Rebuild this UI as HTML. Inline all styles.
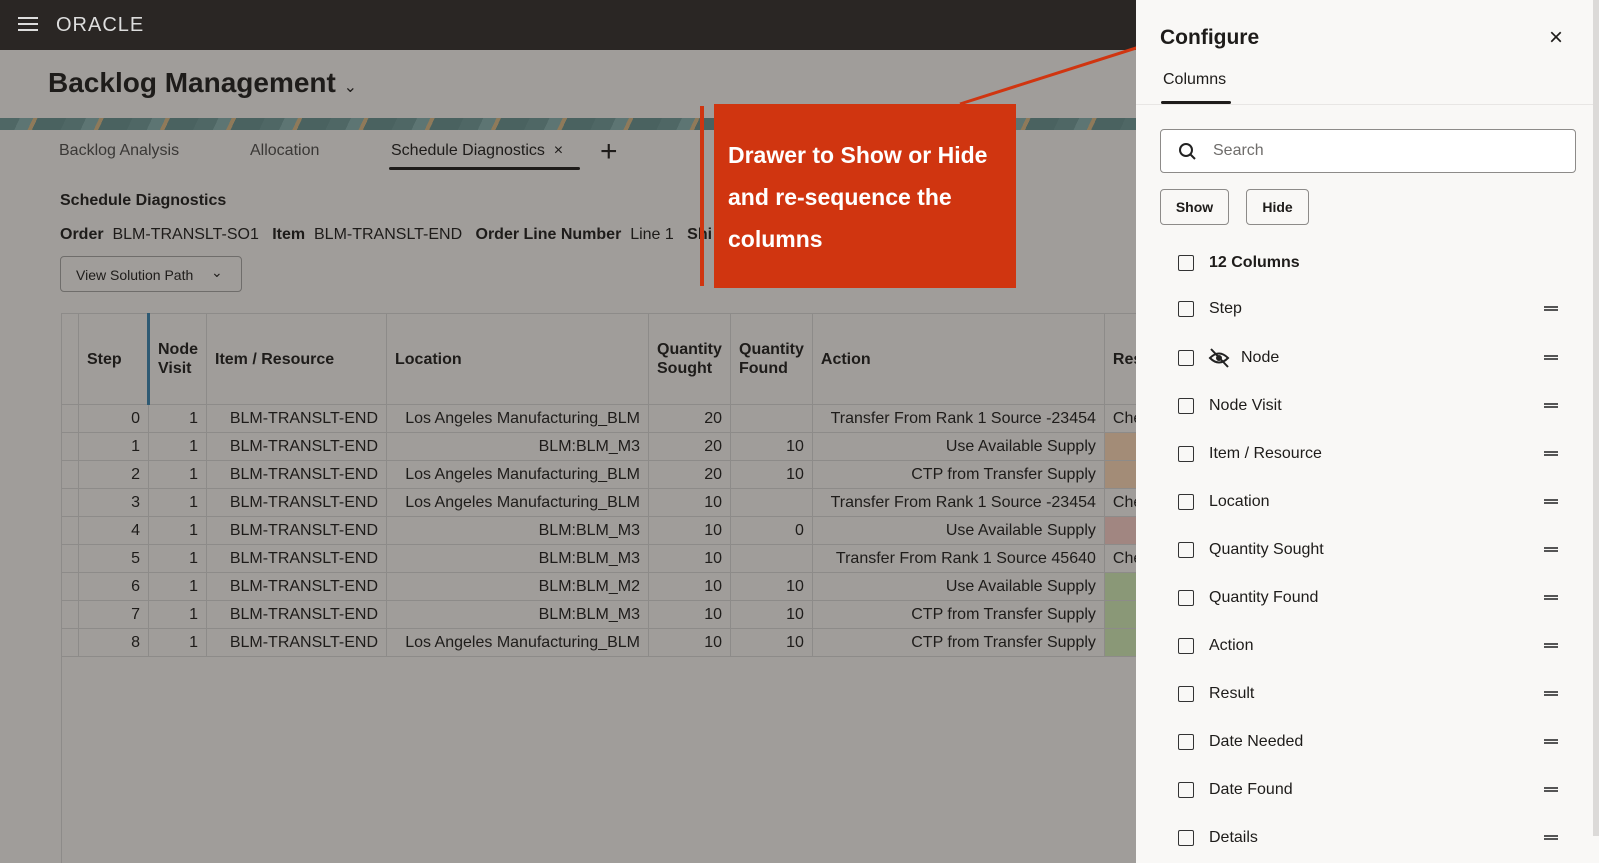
<!DOCTYPE html>
<html><head><meta charset="utf-8"><style>
*{box-sizing:border-box;margin:0;padding:0}
body{width:1599px;height:863px;overflow:hidden;position:relative;font-family:"Liberation Sans",sans-serif;background:#a09d9a;color:#1e1c1a}
.abs{position:absolute;white-space:nowrap}
.top{position:absolute;left:0;top:0;width:1599px;height:50px;background:#2a2624}
.banner{position:absolute;left:0;top:118px;width:1136px;height:12px;background:repeating-linear-gradient(115deg,#4f6765 0 18px,#5d7573 18px 30px,#8f7a5a 30px 34px,#4a6260 34px 60px)}
table{position:absolute;left:61px;top:313px;border-collapse:collapse;font-size:16px;color:#1e1c1a}
td,th{border:1px solid #8d8b89;height:28px;padding:0 8px;text-align:right}
th{height:91px;text-align:left;font-weight:bold;font-size:16px;line-height:19px;vertical-align:middle}
.drawer{position:absolute;left:1136px;top:0;width:463px;height:863px;background:#f9f8f6}
.row{position:absolute;left:1178px;font-size:16px;color:#1e1c1a}
.cb{position:absolute;left:0;top:0;width:16px;height:16px;border:1.5px solid #333;border-radius:2px}
.lbl{position:absolute;left:31px;top:-1px;white-space:nowrap}
.h{position:absolute;left:1544px;width:14px;height:5px;border-top:2px solid #555;border-bottom:2px solid #555}
</style></head><body>
<div class="top"></div>
<div class="abs" style="left:18px;top:17px;width:20px;height:14px;border-top:2px solid #ddd;border-bottom:2px solid #ddd"><div style="margin-top:4px;border-top:2px solid #ddd"></div></div>
<div class="abs" style="left:56px;top:14px;font-size:20px;color:#ddd;letter-spacing:1px;font-weight:normal">ORACLE</div>
<div class="abs" style="left:48px;top:67px;font-size:28px;font-weight:bold">Backlog Management <span style="font-size:16px;font-weight:normal">&#8964;</span></div>
<div class="banner"></div>
<div class="abs" style="left:59px;top:142px;font-size:16px;color:#3a3836">Backlog Analysis</div>
<div class="abs" style="left:250px;top:142px;font-size:16px;color:#3a3836">Allocation</div>
<div class="abs" style="left:391px;top:142px;font-size:16px">Schedule Diagnostics &nbsp;×</div>
<div class="abs" style="left:389px;top:167px;width:191px;height:3px;background:#1e1c1a;border-radius:2px"></div>
<div class="abs" style="left:600px;top:135px;font-size:30px;font-weight:300">+</div>
<div class="abs" style="left:60px;top:192px;font-size:16px;font-weight:bold">Schedule Diagnostics</div>
<div class="abs" style="left:60px;top:226px;font-size:16px"><b>Order</b>&nbsp; BLM-TRANSLT-SO1 &nbsp;&nbsp;<b>Item</b>&nbsp; BLM-TRANSLT-END &nbsp;&nbsp;<b>Order Line Number</b>&nbsp; Line 1 &nbsp;&nbsp;<b>Shi</b></div>
<div class="abs" style="left:60px;top:256px;width:182px;height:36px;border:1px solid #6f6d6b;border-radius:4px;font-size:14px;padding:10px 15px">View Solution Path <span style="position:absolute;left:150px;top:7px;font-size:14px">&#8964;</span></div>
<div class="abs" style="left:61px;top:404px;width:1px;height:459px;background:#8d8b89"></div>
<table>
<tr><th style="width:17px;padding:0"></th><th style="width:70px">Step</th><th style="width:56px;border-left:3px solid #2f5a73">Node<br>Visit</th><th style="width:180px">Item / Resource</th><th style="width:262px">Location</th><th style="width:82px">Quantity<br>Sought</th><th style="width:81px">Quantity<br>Found</th><th style="width:292px">Action</th><th style="width:60px">Resu</th></tr>
<tr><td></td><td>0</td><td>1</td><td>BLM-TRANSLT-END</td><td>Los Angeles Manufacturing_BLM</td><td>20</td><td></td><td>Transfer From Rank 1 Source -23454</td><td style="text-align:left">Che</td></tr>
<tr><td></td><td>1</td><td>1</td><td>BLM-TRANSLT-END</td><td>BLM:BLM_M3</td><td>20</td><td>10</td><td>Use Available Supply</td><td style="background:#a38c77"></td></tr>
<tr><td></td><td>2</td><td>1</td><td>BLM-TRANSLT-END</td><td>Los Angeles Manufacturing_BLM</td><td>20</td><td>10</td><td>CTP from Transfer Supply</td><td style="background:#a38c77"></td></tr>
<tr><td></td><td>3</td><td>1</td><td>BLM-TRANSLT-END</td><td>Los Angeles Manufacturing_BLM</td><td>10</td><td></td><td>Transfer From Rank 1 Source -23454</td><td style="text-align:left">Che</td></tr>
<tr><td></td><td>4</td><td>1</td><td>BLM-TRANSLT-END</td><td>BLM:BLM_M3</td><td>10</td><td>0</td><td>Use Available Supply</td><td style="background:#a18681"></td></tr>
<tr><td></td><td>5</td><td>1</td><td>BLM-TRANSLT-END</td><td>BLM:BLM_M3</td><td>10</td><td></td><td>Transfer From Rank 1 Source 45640</td><td style="text-align:left">Che</td></tr>
<tr><td></td><td>6</td><td>1</td><td>BLM-TRANSLT-END</td><td>BLM:BLM_M2</td><td>10</td><td>10</td><td>Use Available Supply</td><td style="background:#8a9877"></td></tr>
<tr><td></td><td>7</td><td>1</td><td>BLM-TRANSLT-END</td><td>BLM:BLM_M3</td><td>10</td><td>10</td><td>CTP from Transfer Supply</td><td style="background:#8a9877"></td></tr>
<tr><td></td><td>8</td><td>1</td><td>BLM-TRANSLT-END</td><td>Los Angeles Manufacturing_BLM</td><td>10</td><td>10</td><td>CTP from Transfer Supply</td><td style="background:#8a9877"></td></tr>
</table>
<div class="abs" style="left:700px;top:106px;width:4px;height:180px;background:#d03510"></div>
<div class="abs" style="left:714px;top:104px;width:302px;height:184px;background:#d03510;color:#fff;font-weight:bold;font-size:23px;line-height:42px;padding:30px 0 0 14px;white-space:normal">Drawer to Show or Hide and re-sequence the columns</div>
<svg class="abs" style="left:950px;top:30px" width="220" height="80"><line x1="10" y1="74" x2="205" y2="12" stroke="#d03510" stroke-width="3"/></svg>
<div class="drawer"></div>
<div class="abs" style="left:1593px;top:0;width:6px;height:836px;background:#dcdad8"></div>
<div class="abs" style="left:1160px;top:26px;font-size:21px;font-weight:bold">Configure</div>
<div class="abs" style="left:1549px;top:24px;font-size:24px">×</div>
<div class="abs" style="left:1163px;top:71px;font-size:16px">Columns</div>
<div class="abs" style="left:1161px;top:101px;width:70px;height:3px;background:#1e1c1a;border-radius:2px"></div>
<div class="abs" style="left:1136px;top:104px;width:457px;height:1px;background:#e8e6e4"></div>
<div class="abs" style="left:1160px;top:129px;width:416px;height:44px;border:1px solid #8d8b89;border-radius:4px;background:#fff"></div>
<svg class="abs" style="left:1178px;top:142px" width="20" height="20"><circle cx="8" cy="8" r="6" fill="none" stroke="#222" stroke-width="2"/><line x1="12.5" y1="12.5" x2="17" y2="17" stroke="#222" stroke-width="2"/></svg>
<div class="abs" style="left:1213px;top:142px;font-size:16px;color:#6f6d6b">Search</div>
<div class="abs" style="left:1160px;top:189px;width:69px;height:36px;border:1px solid #8d8b89;border-radius:4px;font-size:14px;font-weight:bold;text-align:center;line-height:34px">Show</div>
<div class="abs" style="left:1246px;top:189px;width:63px;height:36px;border:1px solid #8d8b89;border-radius:4px;font-size:14px;font-weight:bold;text-align:center;line-height:34px">Hide</div>
<div class="row" style="top:255px"><div class="cb"></div><div class="lbl" style="font-weight:bold">12 Columns</div></div>
<div class="row" style="top:301px"><div class="cb"></div><div class="lbl">Step</div></div><div class="h" style="top:306px"></div>
<div class="row" style="top:350px"><div class="cb"></div><svg style="position:absolute;left:30px;top:-3px" width="22" height="22"><path d="M2 11 Q11 2 20 11 Q11 20 2 11Z" fill="none" stroke="#222" stroke-width="2"/><circle cx="11" cy="11" r="3" fill="#222"/><line x1="3" y1="2" x2="20" y2="20" stroke="#222" stroke-width="2"/></svg><div class="lbl" style="left:63px">Node</div></div><div class="h" style="top:355px"></div>
<div class="row" style="top:398px"><div class="cb"></div><div class="lbl">Node Visit</div></div><div class="h" style="top:403px"></div>
<div class="row" style="top:446px"><div class="cb"></div><div class="lbl">Item / Resource</div></div><div class="h" style="top:451px"></div>
<div class="row" style="top:494px"><div class="cb"></div><div class="lbl">Location</div></div><div class="h" style="top:499px"></div>
<div class="row" style="top:542px"><div class="cb"></div><div class="lbl">Quantity Sought</div></div><div class="h" style="top:547px"></div>
<div class="row" style="top:590px"><div class="cb"></div><div class="lbl">Quantity Found</div></div><div class="h" style="top:595px"></div>
<div class="row" style="top:638px"><div class="cb"></div><div class="lbl">Action</div></div><div class="h" style="top:643px"></div>
<div class="row" style="top:686px"><div class="cb"></div><div class="lbl">Result</div></div><div class="h" style="top:691px"></div>
<div class="row" style="top:734px"><div class="cb"></div><div class="lbl">Date Needed</div></div><div class="h" style="top:739px"></div>
<div class="row" style="top:782px"><div class="cb"></div><div class="lbl">Date Found</div></div><div class="h" style="top:787px"></div>
<div class="row" style="top:830px"><div class="cb"></div><div class="lbl">Details</div></div><div class="h" style="top:835px"></div>
</body></html>
